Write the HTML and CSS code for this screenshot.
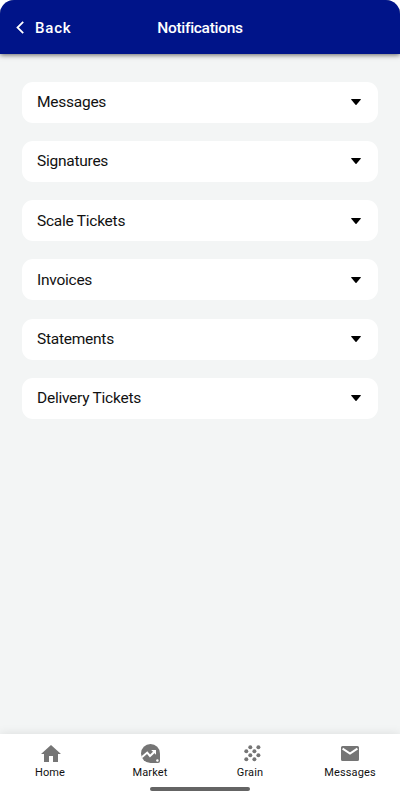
FILE: index.html
```html
<!DOCTYPE html>
<html lang="en">
  <head>
    <meta charset="utf-8" />
    <meta name="viewport" content="width=device-width, initial-scale=1" />
    <title>Notifications</title>
    <link rel="stylesheet" href="styles.css">
  </head>
  <body>
    <div class="screen">
      <header class="topbar">
        <a class="back" href="#">
          <svg width="8" height="13" viewBox="0 0 8 13"><path d="M7.200 .8 1.500 6.500l5.700 5.700" fill="none" stroke="#fff" stroke-width="1.800" /></svg>
          <span>Back</span>
        </a>
        <h1>Notifications</h1>
      </header>

      <main class="list">
        <div class="row"><span>Messages</span><svg class="arrow" viewBox="0 0 10 6"><path d="M0.5 0h9q.6.2.2.8L5.5 5.8q-.5.4-1 0L.3.8Q-.1.2.5 0z" /></svg></div>
        <div class="row"><span>Signatures</span><svg class="arrow" viewBox="0 0 10 6"><path d="M0.5 0h9q.6.2.2.8L5.5 5.8q-.5.4-1 0L.3.8Q-.1.2.5 0z" /></svg></div>
        <div class="row"><span>Scale Tickets</span><svg class="arrow" viewBox="0 0 10 6"><path d="M0.5 0h9q.6.2.2.8L5.5 5.8q-.5.4-1 0L.3.8Q-.1.2.5 0z" /></svg></div>
        <div class="row"><span>Invoices</span><svg class="arrow" viewBox="0 0 10 6"><path d="M0.5 0h9q.6.2.2.8L5.5 5.8q-.5.4-1 0L.3.8Q-.1.2.5 0z" /></svg></div>
        <div class="row"><span>Statements</span><svg class="arrow" viewBox="0 0 10 6"><path d="M0.5 0h9q.6.2.2.8L5.5 5.8q-.5.4-1 0L.3.8Q-.1.2.5 0z" /></svg></div>
        <div class="row"><span>Delivery Tickets</span><svg class="arrow" viewBox="0 0 10 6"><path d="M0.5 0h9q.6.2.2.8L5.5 5.8q-.5.4-1 0L.3.8Q-.1.2.5 0z" /></svg></div>
      </main>

      <nav class="tabs">
        <a class="tab" href="#">
          <svg class="home" viewBox="0 0 20 17"><path d="M8 17v-6h4v6h5V9h3L10 0 0 9h3v8z" /></svg>
          <span>Home</span>
        </a>
        <a class="tab" href="#">
          <svg class="market" viewBox="0 0 19 19">
            <path d="M9.5 0A9.5 9.5 0 0 1 19 9.5V17a2 2 0 0 1-2 2H9.5a9.5 9.5 0 0 1 0-19z" />
            <path d="M.8 13.2 6.2 8.6 9 12l5-4.8" fill="none" stroke="#fff" stroke-width="2" />
            <path class="cutout" d="M10.2 6H15v4.8z" />
            <circle class="cutout" cx="16.4" cy="16.5" r="1.2" />
          </svg>
          <span>Market</span>
        </a>
        <a class="tab" href="#">
          <svg class="grain" viewBox="0 0 17 17">
            <circle cx="6.3" cy="2.2" r="2" /><circle cx="14.4" cy="2.2" r="2" />
            <circle cx="2.3" cy="6.3" r="2" /><circle cx="10.4" cy="6.3" r="2" />
            <circle cx="6.3" cy="10.3" r="2" /><circle cx="14.4" cy="10.3" r="2" />
            <circle cx="2.3" cy="14.3" r="2" /><circle cx="10.4" cy="14.3" r="2" />
          </svg>
          <span>Grain</span>
        </a>
        <a class="tab" href="#">
          <svg class="mail" viewBox="0 0 18 15"><path d="M1.5 0h15A1.5 1.5 0 0 1 18 1.5v12a1.5 1.5 0 0 1-1.5 1.5h-15A1.5 1.5 0 0 1 0 13.5v-12A1.5 1.5 0 0 1 1.5 0z" /><path d="m1.6 2.7 7.4 4.9 7.4-4.9" fill="none" stroke="#fff" stroke-width="2" /></svg>
          <span>Messages</span>
        </a>
        <div class="indicator"></div>
      </nav>
    </div>
  </body>
</html>
```
FILE: styles.css
```css
* {
  box-sizing: border-box;
}

body {
  margin: 0;
  background-color: #fff;
  font-family: Roboto, "Liberation Sans", sans-serif;
}

a {
  color: inherit;
  text-decoration: none;
}

.screen {
  display: flex;
  flex-direction: column;
  height: 800px;
  overflow: hidden;
  border-radius: 14px 14px 0 0;
  background-color: #f3f5f5;
}

.topbar {
  display: grid;
  grid-template-columns: 1fr auto 1fr;
  align-items: center;
  height: 53.5px;
  padding: 2px 16px 0;
  color: #fff;
  background-color: #001489;
  box-shadow: 0 1px 5px rgba(0, 0, 0, 0.6);
}

.back {
  display: flex;
  align-items: center;
  gap: 11px;
  font-size: 15px;
  font-weight: 500;
  letter-spacing: 0.8px;
}

.topbar h1 {
  margin: 0;
  font-size: 15.5px;
  font-weight: 500;
  letter-spacing: -0.3px;
}

.list {
  flex: 1;
  display: flex;
  flex-direction: column;
  gap: 18.3px;
  padding: 28px 22px 0;
}

.row {
  display: flex;
  align-items: center;
  justify-content: space-between;
  height: 41px;
  padding: 0 17.5px 0 15px;
  border-radius: 11px;
  background-color: #fff;
  color: #111;
  font-size: 15.5px;
  letter-spacing: -0.25px;
}

.arrow {
  width: 10px;
  height: 6px;
}

.tabs {
  position: relative;
  display: grid;
  grid-template-columns: repeat(4, 1fr);
  height: 66px;
  background-color: #fff;
  box-shadow: 0 0 10px rgba(0, 0, 0, 0.1);
}

.tab {
  display: flex;
  flex-direction: column;
  align-items: center;
  justify-content: flex-end;
  height: 45px;
  color: #111;
  font-size: 11px;
  line-height: 13px;
  letter-spacing: 0.15px;
}

.tab svg {
  fill: #757575;
}

.tab .cutout {
  fill: #fff;
}

.home {
  width: 20px;
  height: 17px;
  margin: 0 0 4px 2px;
}

.market {
  width: 19px;
  height: 19px;
  margin-bottom: 3px;
}

.grain {
  width: 17px;
  height: 17px;
  margin: 0 0 4px 4px;
}

.mail {
  width: 18px;
  height: 15px;
  margin-bottom: 5px;
}

.indicator {
  position: absolute;
  left: 150px;
  bottom: 9px;
  width: 100px;
  height: 4px;
  border-radius: 2px;
  background-color: #646464;
}
```
